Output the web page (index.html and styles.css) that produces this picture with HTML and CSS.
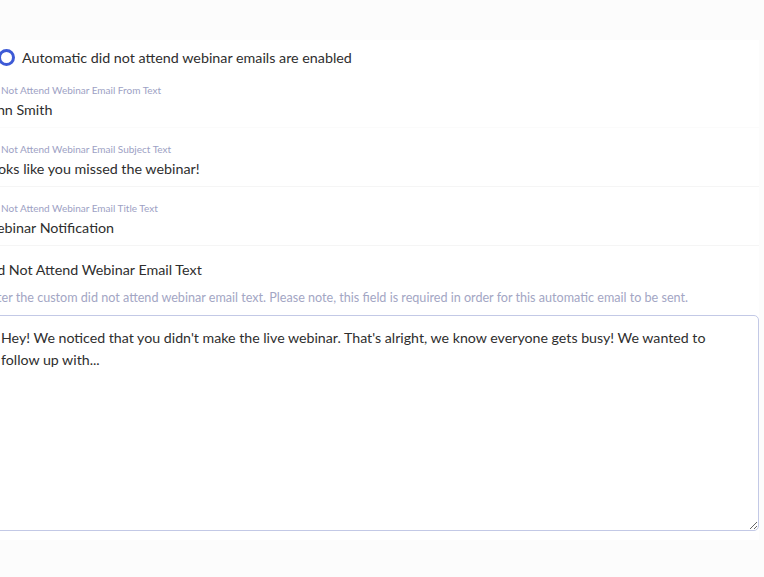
FILE: index.html
```html
<!DOCTYPE html>
<html lang="en">
<head>
  <meta charset="UTF-8" />
  <title>Did Not Attend Emails</title>
  <link rel="stylesheet" href="styles.css">
</head>
<body>
  <div class="settings-card">
    <div class="toggle-row">
      <div class="toggle"><span class="toggle-knob"></span></div>
      <span class="toggle-label">Automatic did not attend webinar emails are enabled</span>
    </div>

    <div class="field">
      <div class="field-label">Did Not Attend Webinar Email From Text</div>
      <div class="field-value">John Smith</div>
    </div>

    <div class="field">
      <div class="field-label">Did Not Attend Webinar Email Subject Text</div>
      <div class="field-value">Looks like you missed the webinar!</div>
    </div>

    <div class="field">
      <div class="field-label">Did Not Attend Webinar Email Title Text</div>
      <div class="field-value">Webinar Notification</div>
    </div>

    <div class="text-block">
      <div class="block-title">Did Not Attend Webinar Email Text</div>
      <div class="block-help">Enter the custom did not attend webinar email text. Please note, this field is required in order for this automatic email to be sent.</div>
      <textarea class="email-text">Hey! We noticed that you didn't make the live webinar. That's alright, we know everyone gets busy! We wanted to follow up with...</textarea>
    </div>
  </div>
</body>
</html>
```

FILE: styles.css
```css
body {
  margin: 0;
  background: #fcfcfc;
  font-family: 'Lato', 'Noto Sans', sans-serif;
  color: #2e2e2e;
  overflow: hidden;
}

.settings-card {
  background: #fff;
  margin: 40px 5px 0 -17px;
  padding: 8px 0 9px 0;
}

.toggle-row {
  display: flex;
  align-items: center;
  gap: 7px;
  height: 18px;
  margin-bottom: 3px;
}

.toggle {
  width: 32px;
  display: flex;
  justify-content: flex-end;
}

.toggle-knob {
  width: 17px;
  height: 17px;
  box-sizing: border-box;
  border: 3px solid #3d5ad6;
  border-radius: 50%;
}

.toggle-label {
  font-size: 14.3px;
}

.field {
  padding: 14px 0 7px;
  border-bottom: 1px solid #f5f5f5;
}

.field:nth-child(2) {
  border-bottom-color: #fbfbfb;
}

.field-label {
  font-size: 10px;
  color: #9da1c4;
  line-height: 14px;
}

.field-value {
  font-size: 14.3px;
  line-height: 20px;
  margin-top: 3px;
}

.text-block {
  padding-top: 14px;
}

.block-title {
  font-size: 14.3px;
  line-height: 20px;
}

.block-help {
  font-size: 12.6px;
  color: #a3a6c4;
  line-height: 16px;
  margin-top: 10px;
}

.email-text {
  display: block;
  width: 100%;
  box-sizing: border-box;
  height: 216px;
  margin-top: 9px;
  padding: 11px 14px 11px 17px;
  border: 1px solid #c3c9e6;
  border-radius: 5px;
  font-family: inherit;
  font-size: 14.2px;
  line-height: 22px;
  color: #2e2e2e;
  resize: vertical;
}
```
